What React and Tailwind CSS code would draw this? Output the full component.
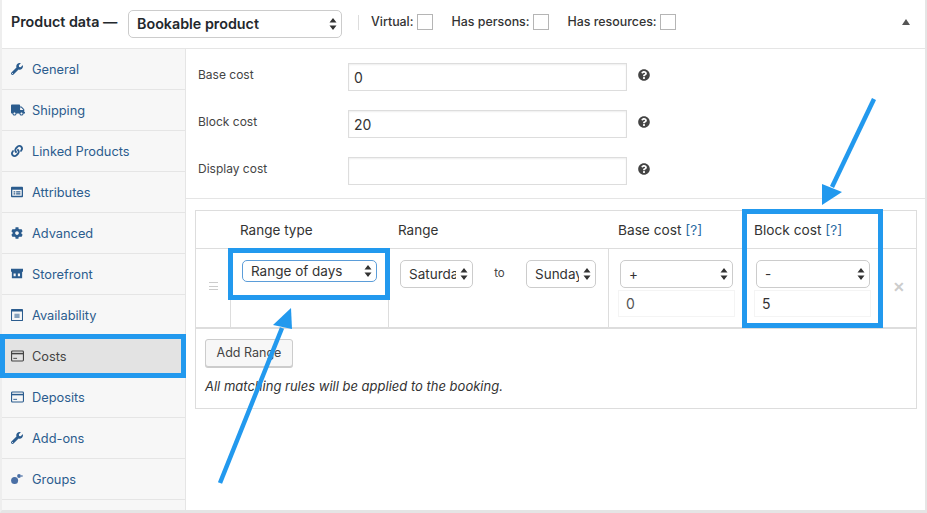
import React from "react";
import { FaWrench, FaTruck, FaLink, FaCog, FaQuestionCircle } from "react-icons/fa";

const font = { fontFamily: "Inter, 'Liberation Sans', sans-serif" };

const Card = ({ className = "" }) => (
  <svg viewBox="0 0 14 12" className={className}>
    <rect x="0.6" y="0.6" width="12.8" height="10.8" rx="1" fill="none" stroke="currentColor" strokeWidth="1.2" />
    <rect x="0.6" y="2.6" width="12.8" height="1.6" fill="currentColor" />
    <rect x="2.5" y="8" width="4" height="1" fill="currentColor" />
  </svg>
);
const Attr = ({ className = "" }) => (
  <svg viewBox="0 0 14 12" className={className}>
    <path fill="currentColor" fillRule="evenodd" d="M1 0h12a1 1 0 0 1 1 1v10a1 1 0 0 1-1 1H1a1 1 0 0 1-1-1V1a1 1 0 0 1 1-1zM1.5 3.5v7h11v-7zM3 5h2v1.5H3zM6 5h5v1.5H6zM3 7.5h2V9H3zM6 7.5h5V9H6z" />
  </svg>
);
const Store = ({ className = "" }) => (
  <svg viewBox="0 0 14 12" className={className}>
    <path fill="currentColor" fillRule="evenodd" d="M0 0h14v3.5H13V11H1V3.5H0zM3 5.5v3h2.5v-3zM8 5.5v3h2.5v-3z" />
  </svg>
);
const Cal = ({ className = "" }) => (
  <svg viewBox="0 0 14 14" className={className}>
    <path fill="currentColor" fillRule="evenodd" d="M1 0h12a1 1 0 0 1 1 1v12a1 1 0 0 1-1 1H1a1 1 0 0 1-1-1V1a1 1 0 0 1 1-1zM1.2 3v9.8h11.6V3z" />
    <rect x="4" y="5.5" width="6" height="5" fill="currentColor" opacity="0.55" />
  </svg>
);
const Groups = ({ className = "" }) => (
  <svg viewBox="0 0 12 12" className={className}>
    <circle cx="3.6" cy="7.4" r="3.5" fill="currentColor" />
    <circle cx="8" cy="3" r="1.9" fill="currentColor" />
    <circle cx="10.8" cy="3" r="1.1" fill="currentColor" opacity="0.7" />
  </svg>
);

const items = [
  ["General", <FaWrench className="w-3 h-3" />],
  ["Shipping", <FaTruck className="w-[14px] h-[14px]" />],
  ["Linked Products", <FaLink className="w-3 h-3" />],
  ["Attributes", <Attr className="w-3 h-3" />],
  ["Advanced", <FaCog className="w-3 h-3" />],
  ["Storefront", <Store className="w-3 h-3" />],
  ["Availability", <Cal className="w-3 h-3" />],
  ["Costs", <Card className="w-[13px] h-[12px]" />],
  ["Deposits", <Card className="w-[13px] h-[12px]" />],
  ["Add-ons", <FaWrench className="w-3 h-3" />],
  ["Groups", <Groups className="w-3 h-3 text-[#4a6fa5]" />],
];

const Updown = ({ className = "" }) => (
  <svg viewBox="0 0 8 13" className={"w-2 h-[13px] " + className}>
    <path d="M4 0.5 7.5 5H.5zM4 12.5 .5 8h7z" fill="#333" />
  </svg>
);

const Select = ({ value, className = "", focus = false, textClass = "" }) => (
  <div className={"relative " + className}>
    <select
      value={value}
      onChange={() => {}}
      style={font}
      className={
        "block appearance-none w-full h-full bg-white rounded-[5px] border outline-none pl-2 pr-4 " +
        (focus ? "border-[#5b9dd9] " : "border-[#ccc] ") +
        textClass
      }
    >
      <option>{value}</option>
    </select>
    <Updown className="absolute right-[5px] top-1/2 -translate-y-1/2 pointer-events-none" />
  </div>
);

const Check = () => <span className="w-4 h-4 border border-[#b5b5b5] bg-white inline-block" />;

const Field = ({ label, value }) => (
  <div className="flex items-center h-7 mb-[19px]">
    <span className="w-[150px] text-[12px] text-[#444] -mt-[5px]">{label}</span>
    <input
      readOnly
      value={value}
      style={font}
      className="w-[279px] h-7 border border-[#ddd] shadow-[inset_0_1px_2px_rgba(0,0,0,0.07)] bg-white px-[2px] pl-[5px] text-[14px] text-[#333] outline-none"
    />
    <FaQuestionCircle className="w-3 h-3 ml-[11px] text-[#444] -mt-[4px]" />
  </div>
);

export default function App() {
  return (
    <div style={font} className="relative w-[927px] h-[513px] bg-white overflow-hidden flex flex-col text-[#333]">
      <div className="flex-1 flex flex-col min-h-0 border-l-2 border-l-[#eee] border-r-2 border-r-[#e5e5e5] border-b-[3px] border-b-[#e5e5e5]">
        {/* header */}
        <div className="h-[49px] shrink-0 border-b border-[#e5e5e5] flex items-center pl-[9px] pr-[15px]">
          <span className="text-[14.3px] font-semibold text-[#23282d] w-[117px] -mt-[4px] whitespace-nowrap">Product data —</span>
          <Select value="Bookable product" className="w-[214px] h-7 -mt-[1px]" textClass="text-[14.3px] font-semibold text-[#23282d]" />
          <span className="w-px h-[15px] bg-[#ddd] ml-4 mr-3 -mt-[3px]" />
          <div className="flex items-center gap-[3px] -mt-[3px] text-[12.4px] font-medium text-[#333]">
            <span>Virtual:</span>
            <Check />
            <span className="ml-[16px]">Has persons:</span>
            <Check />
            <span className="ml-[16px]">Has resources:</span>
            <Check />
          </div>
          <span className="ml-auto -mt-[5px] w-0 h-0 border-x-[4px] border-x-transparent border-b-[6px] border-b-[#555]" />
        </div>

        <div className="flex flex-1 min-h-0">
          {/* sidebar */}
          <div className="w-[184px] shrink-0 bg-[#f7f7f7] border-r border-[#e5e5e5] flex flex-col">
            {items.map(([name, icon]) => {
              const active = name === "Costs";
              return (
                <div
                  key={name}
                  className={
                    "h-[41px] shrink-0 flex items-center pt-[2px] border-b text-[12.8px] " +
                    (active ? "bg-[#e3e3e3] text-[#444] border-[#e3e3e3]" : "text-[#2b5c8e] border-[#e5e5e5]")
                  }
                >
                  <span className="w-[30px] pl-[9px] flex items-center -mt-[3px]">{icon}</span>
                  <span>{name}</span>
                </div>
              );
            })}
          </div>

          {/* main */}
          <div className="flex-1 min-w-0">
            <div className="h-[150px] border-b border-[#e5e5e5] pt-[14px] pl-[12px]">
              <Field label="Base cost" value="0" />
              <Field label="Block cost" value="20" />
              <Field label="Display cost" value="" />
            </div>

            <div className="mt-[11px] ml-[9px] mr-[8px] border border-[#ddd] h-[199px] flex flex-col">
              <div className="grid grid-cols-[35px_158px_220px_136px_1fr] h-[38px] shrink-0 border-b border-[#ddd] items-center text-[13.5px] text-[#333] pt-[1px]">
                <span />
                <span className="pl-[9px]">Range type</span>
                <span className="pl-[9px]">Range</span>
                <span className="pl-[9px] text-[13.7px]">Base cost <span className="text-[#2b6ca3]">[?]</span></span>
                <span className="pl-[9px] text-[13.7px]">Block cost <span className="text-[#2b6ca3]">[?]</span></span>
              </div>

              <div className="grid grid-cols-[35px_158px_220px_136px_141px_1fr] h-[80px] shrink-0 border-b-2 border-[#ddd]">
                <div className="flex items-center justify-center pb-[4px] border-r border-[#ddd]">
                  <span className="w-[9px] h-[8px] border-y border-[#ccc] flex items-center"><span className="w-full h-px bg-[#ccc]" /></span>
                </div>
                <div className="border-r border-[#ddd] pt-[11px] pl-[11px]">
                  <Select value="Range of days" focus className="w-[135px] h-[22px]" textClass="text-[13.5px] text-[#333]" />
                </div>
                <div className="border-r border-[#ddd] pt-[11px] pl-[11px] flex items-start">
                  <Select value="Saturday" className="w-[73px] h-7" textClass="text-[13.5px] text-[#333]" />
                  <span className="w-[53px] text-center text-[11.5px] text-[#444] mt-[5px]">to</span>
                  <Select value="Sunday" className="w-[70px] h-7" textClass="text-[13.5px] text-[#333]" />
                </div>
                <div className="border-r border-[#ddd] pt-[11px] pl-[11px] pr-[10px]">
                  <Select value="+" className="w-[113px] h-7" textClass="text-[13.5px] text-[#333]" />
                  <input readOnly value="0" style={font} className="w-[117px] -ml-[2px] mt-[2px] block h-[27px] border border-[#f4f4f4] px-[7px] text-[14px] text-[#555] outline-none" />
                </div>
                <div className="pt-[11px] pl-[11px]">
                  <Select value="-" className="w-[114px] h-7" textClass="text-[13.5px] text-[#333]" />
                  <input readOnly value="5" style={font} className="w-[117px] -ml-[2px] mt-[2px] block h-[27px] border border-[#f4f4f4] px-[7px] text-[14px] text-[#333] outline-none" />
                </div>
                <div className="flex items-center text-[#ccc] pl-[7px] pb-[4px] text-[14px] font-semibold">✕</div>
              </div>

              <div className="pl-[9px] pt-[10px]">
                <button style={font} className="h-7 w-[88px] border border-[#ccc] rounded-[3px] bg-[#f7f7f7] shadow-[0_1px_0_#ccc] text-[12.5px] text-[#444]">
                  Add Range
                </button>
                <p className="mt-[10px] text-[13px] italic text-[#333]">All matching rules will be applied to the booking.</p>
              </div>
            </div>
          </div>
        </div>
      </div>

      {/* annotations drawn on top of the screenshot */}
      <div className="absolute left-0 top-[334px] w-[186px] h-[44px] border-[5px] border-[#2299ee]" />
      <div className="absolute left-[228px] top-[248px] w-[162px] h-[52px] border-[5px] border-[#2299ee]" />
      <div className="absolute left-[742px] top-[209px] w-[141px] h-[119px] border-[5px] border-[#2299ee]" />
      <svg className="absolute left-0 top-0 w-[927px] h-[513px] pointer-events-none" viewBox="0 0 927 513">
        <path d="M220 483 282 328" stroke="#2299ee" strokeWidth="4.5" fill="none" />
        <path d="M291 308 273 325 292 329z" fill="#2299ee" />
        <path d="M874 99 832 187" stroke="#2299ee" strokeWidth="4.5" fill="none" />
        <path d="M822 205 822 184 842 192z" fill="#2299ee" />
      </svg>
    </div>
  );
}
